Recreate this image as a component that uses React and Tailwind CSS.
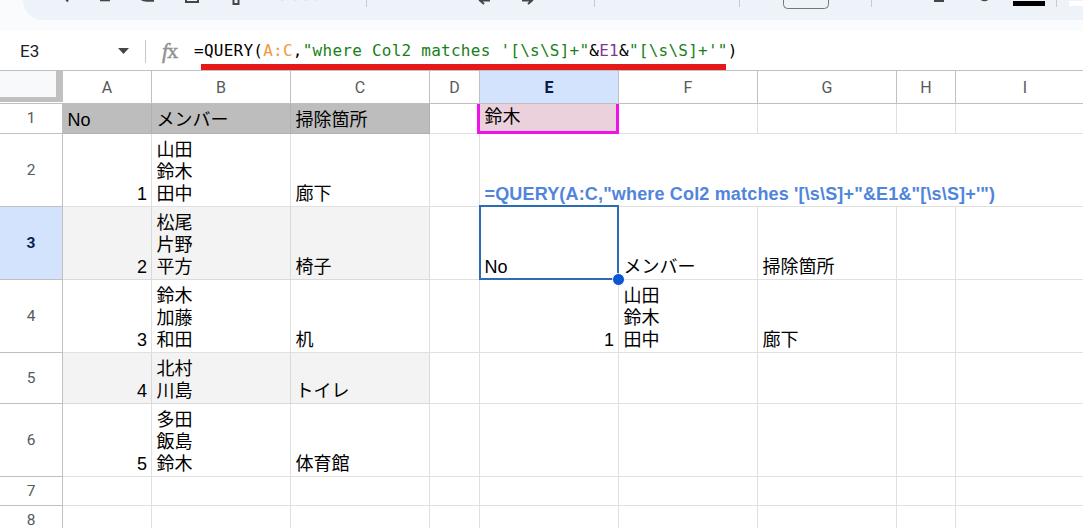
const COLS = ['A', 'B', 'C', 'D', 'E', 'F', 'G', 'H', 'I'];

const GRID = 'grid grid-cols-[63px_89px_139px_139px_50px_139px_139px_139px_59px_139px]';

const ROWS = [
  { n: 1, h: 'h-[30px]', cells: { A: 'No', B: 'メンバー', C: '掃除箇所', E: '鈴木' }, fill: 'bg-[#bdbdbd] border-[#b0b0b0]' },
  { n: 2, h: 'h-[73px]', cells: { A: 1, B: '山田\n鈴木\n田中', C: '廊下', E: '=QUERY(A:C,"where Col2 matches \'[\\s\\S]+"&E1&"[\\s\\S]+\'")' } },
  { n: 3, h: 'h-[73px]', cells: { A: 2, B: '松尾\n片野\n平方', C: '椅子', E: 'No', F: 'メンバー', G: '掃除箇所' }, fill: 'bg-[#f3f3f3] border-[#d9d9d9]' },
  { n: 4, h: 'h-[73px]', cells: { A: 3, B: '鈴木\n加藤\n和田', C: '机', E: 1, F: '山田\n鈴木\n田中', G: '廊下' } },
  { n: 5, h: 'h-[51px]', cells: { A: 4, B: '北村\n川島', C: 'トイレ' }, fill: 'bg-[#f3f3f3] border-[#d9d9d9]' },
  { n: 6, h: 'h-[73px]', cells: { A: 5, B: '多田\n飯島\n鈴木', C: '体育館' } },
  { n: 7, h: 'h-[29px]', cells: {} },
  { n: 8, h: 'h-[29px]', cells: {} },
];

function Toolbar() {
  return (
    <div className="h-[31px] shrink-0 bg-[#f9fbfd] pl-[23px]">
      <div className="h-5 rounded-bl-[24px] bg-[#eef2f9]">
        <svg className="block" width="1060" height="20" viewBox="23 0 1060 20" fill="none">
          <g stroke="#444746" strokeWidth="2">
            <path d="M65-2 68 1.5" />
            <path d="M100 0.3H110" />
            <path d="M141-1Q143 .8 147 .8H154" />
            <path d="M186-2V2H198V-2" />
            <path d="M233.500-1V4H238.500V-1" />
            <path d="M484-3 480 .5 484 4M480 .5H490" />
            <path d="M528-3 532 .5 528 4M532 .5H522" />
            <path d="M934 1H944" />
            <path d="M981-1Q984.500 1.500 988-1" />
          </g>
          <path d="M281 0H284M294 0H297M304 0H307M315 0H317" stroke="#d5d9e0" />
          <path d="M366.500 0V7M594.500 0V7M739.500 0V7M871.500 0V7M1056.500 0V7" stroke="#c7c9ce" />
          <path d="M783.500-2V4.500Q783.500 8.500 787.500 8.500H824.500Q828.500 8.500 828.500 4.500V-2" stroke="#747775" />
          <path d="M1013 1H1045V6H1013Z" fill="#000" />
          <path d="M1069 1H1083V6H1069Z" fill="#fff" />
        </svg>
      </div>
    </div>
  );
}

function FormulaBar() {
  return (
    <div className="relative flex h-[40px] shrink-0 items-center border-b border-[#c0c0c0] bg-white">
      <span className="w-[118px] pl-5 text-[17px] leading-5 text-[#202124] font-['Roboto',sans-serif]">E3</span>
      <svg className="mt-px" width="11" height="6" viewBox="0 0 11 6"><path d="M0 0H11L5.500 6Z" fill="#444746" /></svg>
      <div className="ml-4 mt-px h-[23px] w-px bg-[#c7c7c7]" />
      <span className="ml-[16px] w-[32px] whitespace-nowrap font-['Liberation_Serif',serif] text-[22px] leading-6 text-[#929292]"><i className="mr-px [-webkit-text-stroke:0.5px_#929292]">f</i><span className="-ml-[2px] [-webkit-text-stroke:0.5px_#929292]">x</span></span>
      <span className="whitespace-pre font-['DejaVu_Sans_Mono',monospace] text-[16px] leading-6 tracking-[0.25px] text-black">
        =QUERY(<span className="text-[#f09a38]">A:C</span>,<span className="text-[#188018]">"where Col2 matches '[\s\S]+"</span>&amp;<span className="text-[#7e3794]">E1</span>&amp;<span className="text-[#188018]">"[\s\S]+'"</span>)
      </span>
      <div className="absolute left-[201px] top-[33px] h-[6px] w-[525px] bg-[#e51919]" />
    </div>
  );
}

function Cell({ col, row }) {
  const value = row.cells[col];
  const filled = row.fill && 'ABC'.includes(col);
  const tint = filled ? row.fill : 'border-[#e0e0e0]';
  const isInput = col === 'E' && row.n === 1;
  const isFormula = col === 'E' && row.n === 2;
  const isActive = col === 'E' && row.n === 3;
  const open = row.n === 2 && 'EFGH'.includes(col);
  return (
    <div className={`relative flex flex-col border-b pl-[4.5px] pr-1 ${open ? 'border-r-0' : 'border-r'} ${isInput ? 'justify-start pt-[2px] bg-[#ead1dc] border-[#e0e0e0]' : `justify-end ${row.n === 1 ? 'pb-[2px]' : 'pb-px'} ${tint}`}`}>
      {isInput && <div className="absolute -left-[3px] top-0 h-[30px] w-[142px] border-[3px] border-t-0 border-[#f012e8]" />}
      {isActive && (
        <>
          <div className="absolute -left-px -top-[2px] z-10 h-[75px] w-[140px] border-2 border-[#2a6db5]" />
          <div className="absolute -bottom-[7px] -right-[7px] z-20 size-[13px] rounded-full border border-white bg-[#0b57d0]" />
        </>
      )}
      {value !== undefined && (
        <span className={`whitespace-pre text-[18px] leading-[22px] ${typeof value === 'number' ? 'text-right' : ''} ${isFormula ? 'z-10 font-bold tracking-[0.165px] text-[#5085dc]' : 'text-black'}`}>{value}</span>
      )}
    </div>
  );
}

export default function App() {
  return (
    <div className="flex h-[528px] w-[1083px] flex-col overflow-hidden bg-white font-['Liberation_Sans','Noto_Sans_CJK_JP',sans-serif]" lang="ja">
      <Toolbar />
      <FormulaBar />
      <div className={`${GRID} h-[33px] shrink-0 text-[16px]`}>
        <div className="border-b border-[#c0c0c0] pb-px">
          <div className="h-[31px] border-b-[5px] border-r-[7px] border-[#c0c0c0] bg-[#f8f9fa]" />
        </div>
        {COLS.map((c) => (
          <div key={c} className={`flex items-center justify-center border-b border-r border-[#c0c0c0] pt-px font-['Roboto',sans-serif] ${c === 'E' ? 'bg-[#d3e3fd] font-bold text-[#041e49]' : 'text-[#575a5a]'}`}>{c}</div>
        ))}
      </div>
      {ROWS.map((row) => (
        <div key={row.n} className={`${GRID} ${row.h} shrink-0`}>
          <div className={`flex items-center justify-center border-b border-r border-[#c0c0c0] pt-px font-['Roboto',sans-serif] text-[15.5px] ${row.n === 3 ? 'bg-[#d3e3fd] font-bold text-[#041e49]' : 'text-[#575a5a]'}`}>{row.n}</div>
          {COLS.map((c) => <Cell key={c} col={c} row={row} />)}
        </div>
      ))}
    </div>
  );
}
